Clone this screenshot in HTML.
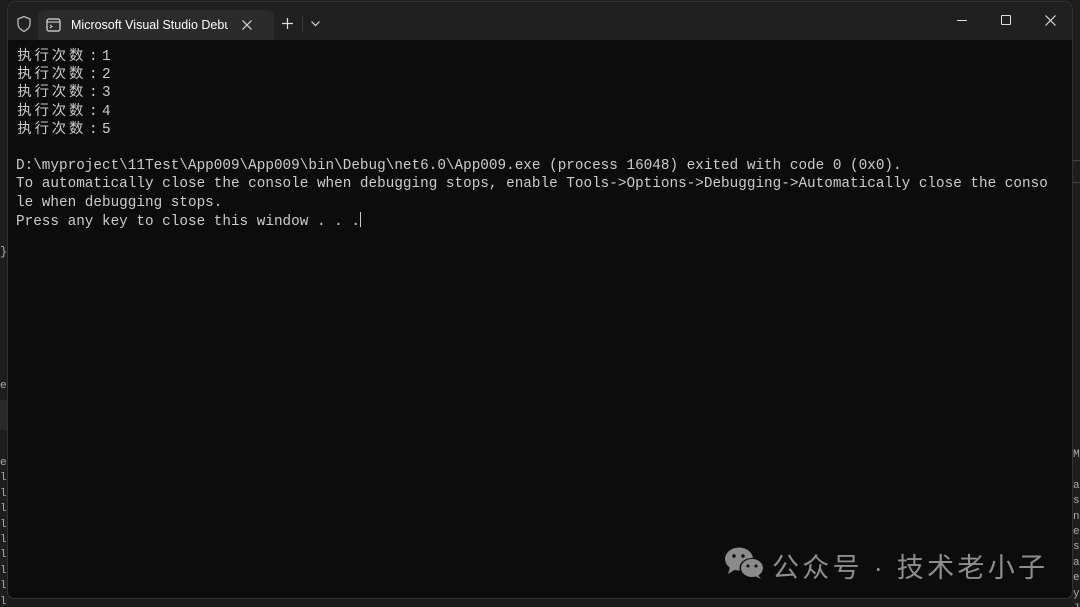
<!DOCTYPE html>
<html><head><meta charset="utf-8"><style>
html,body{margin:0;padding:0;width:1080px;height:607px;overflow:hidden;background:#1e1e1e;position:relative}
.strip{position:absolute;font-family:"Liberation Mono",monospace;font-size:11px;color:#aaa;line-height:15.4px}
#win{position:absolute;left:8px;top:2px;width:1064px;height:596px;background:#0c0c0c;border-radius:8px 8px 6px 6px;overflow:hidden;box-shadow:0 0 0 1px #333}
#bar{position:absolute;left:0;top:0;width:100%;height:38px;background:#202020}
#tab{position:absolute;left:30px;top:8px;width:236px;height:30px;background:#2b2b2b;border-radius:7px 7px 0 0}
#tab .t{position:absolute;left:33px;top:8px;font:12.5px "Liberation Sans",sans-serif;color:#fff;white-space:nowrap;width:157px;overflow:hidden}
#con{position:absolute;left:8px;top:46px;font-family:"Liberation Mono","Noto Sans CJK SC",monospace;font-size:14.33px;line-height:18.2px;color:#cccccc;white-space:pre}
.c{display:inline-block;width:17.2px;text-align:center}
.wm{position:absolute;left:772px;top:546px;font:27px "Liberation Sans","Noto Sans CJK SC",sans-serif;color:#8e8e8e;letter-spacing:3.3px;white-space:nowrap}
</style></head><body>
<div class="strip" style="left:0;top:379px">e<br><br><br><br><br>e<br>l<br>l<br>l<br>l<br>l<br>l<br>l<br>l<br>l<br>l</div>
<div style="position:absolute;left:0;top:400px;width:8px;height:30px;background:#2a2a2a"></div>
<div style="position:absolute;left:0;top:245px;color:#aaa;font:12px 'Liberation Mono',monospace">}</div>
<div class="strip" style="left:1073px;top:448px">M<br><br>a<br>s<br>n<br>e<br>s<br>a<br>e<br>y<br>J</div>
<div style="position:absolute;left:1072px;top:160px;width:8px;height:1px;background:#444"></div>
<div style="position:absolute;left:1072px;top:182px;width:8px;height:1px;background:#444"></div>
<div style="position:absolute;left:8px;top:599px;width:1064px;height:8px;background:#1a1a1a"></div>
<div id="win">
<div id="bar">
<svg style="position:absolute;left:8px;top:13px" width="16" height="18" viewBox="0 0 16 18"><path d="M8 1.5 L14 4 V9 C14 12.5 11 15 8 16.5 C5 15 2 12.5 2 9 V4 Z" fill="none" stroke="#bbb" stroke-width="1.3"/></svg>
<div id="tab">
<svg style="position:absolute;left:8px;top:8px" width="15" height="14" viewBox="0 0 15 14"><rect x="1" y="1" width="13" height="12" rx="2" fill="none" stroke="#ddd" stroke-width="1.2"/><line x1="1" y1="4" x2="14" y2="4" stroke="#ddd" stroke-width="1.1"/><path d="M4 7 L6 8.5 L4 10" fill="none" stroke="#ddd"/></svg>
<div class="t">Microsoft Visual Studio Debug Console</div>
<svg style="position:absolute;left:204px;top:10px" width="10" height="10" viewBox="0 0 10 10"><path d="M0.5 0.5 L9.5 9.5 M9.5 0.5 L0.5 9.5" stroke="#ddd" stroke-width="1.2"/></svg>
</div>
<svg style="position:absolute;left:274px;top:16px" width="11" height="11" viewBox="0 0 11 11"><path d="M5.5 0 V11 M0 5.5 H11" stroke="#ddd" stroke-width="1.2"/></svg>
<div style="position:absolute;left:294px;top:14px;width:1px;height:16px;background:#3a3a3a"></div>
<svg style="position:absolute;left:303px;top:19px" width="9" height="6" viewBox="0 0 9 6"><path d="M0.5 0.5 L4.5 4.5 L8.5 0.5" fill="none" stroke="#ddd" stroke-width="1.2"/></svg>
<div style="position:absolute;left:949px;top:18px;width:10px;height:1px;background:#ddd"></div>
<div style="position:absolute;left:993px;top:13px;width:8px;height:8px;border:1.2px solid #ddd;border-radius:1px"></div>
<svg style="position:absolute;left:1037px;top:13px" width="11" height="11" viewBox="0 0 11 11"><path d="M0.5 0.5 L10.5 10.5 M10.5 0.5 L0.5 10.5" stroke="#ddd" stroke-width="1.2"/></svg>
</div>
<div id="con"><span class="c">执</span><span class="c">行</span><span class="c">次</span><span class="c">数</span><span class="c">:</span>1
<span class="c">执</span><span class="c">行</span><span class="c">次</span><span class="c">数</span><span class="c">:</span>2
<span class="c">执</span><span class="c">行</span><span class="c">次</span><span class="c">数</span><span class="c">:</span>3
<span class="c">执</span><span class="c">行</span><span class="c">次</span><span class="c">数</span><span class="c">:</span>4
<span class="c">执</span><span class="c">行</span><span class="c">次</span><span class="c">数</span><span class="c">:</span>5

D:\myproject\11Test\App009\App009\bin\Debug\net6.0\App009.exe (process 16048) exited with code 0 (0x0).
To automatically close the console when debugging stops, enable Tools-&gt;Options-&gt;Debugging-&gt;Automatically close the conso
le when debugging stops.
Press any key to close this window . . .<span style="display:inline-block;width:1px;height:15px;background:#ccc;vertical-align:-2px"></span></div>
</div>
<svg style="position:absolute;left:724px;top:546px" width="42" height="34" viewBox="0 0 42 34"><ellipse cx="15" cy="13" rx="14" ry="11.5" fill="#8a8a8a"/><path d="M6 21 L4 28 L12 23Z" fill="#8a8a8a"/><ellipse cx="28" cy="22" rx="12.5" ry="10" fill="#0c0c0c"/><ellipse cx="28" cy="22" rx="11" ry="9" fill="#8a8a8a"/><path d="M34 29 L37 33 L31 30Z" fill="#8a8a8a"/><circle cx="10" cy="10" r="1.7" fill="#0c0c0c"/><circle cx="19" cy="10" r="1.7" fill="#0c0c0c"/><circle cx="24" cy="20" r="1.5" fill="#0c0c0c"/><circle cx="32" cy="20" r="1.5" fill="#0c0c0c"/></svg>
<div class="wm">公众号 · 技术老小子</div>
</body></html>
